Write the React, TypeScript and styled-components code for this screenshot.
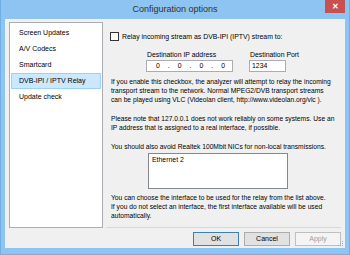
import React from 'react';
import styled, { createGlobalStyle } from 'styled-components';

const GlobalStyle = createGlobalStyle`
	html, body {
		margin: 0;
		padding: 0;
	}
	body {
		width: 350px;
		height: 255px;
		overflow: hidden;
		font-family: 'Liberation Sans', Arial, sans-serif;
		color: #000;
	}
`;

const Window = styled.div`
	width: 350px;
	height: 255px;
	box-sizing: border-box;
	background: #8ec4f1;
	border: 1px solid #71aee6;
	border-top: none;
	display: flex;
	flex-direction: column;
	padding: 0 4px 6px;
`;

const TitleBar = styled.div`
	height: 19px;
	display: grid;
	grid-template-columns: 1fr auto 1fr;
	align-items: start;
`;

const Title = styled.div`
	grid-column: 2;
	font-size: 9px;
	line-height: 19px;
	color: #303030;
`;

const CloseButton = styled.div`
	grid-column: 3;
	justify-self: end;
	width: 20px;
	height: 13px;
	background: #c75050;
	color: #fff;
	font-size: 8px;
	font-weight: bold;
	line-height: 13px;
	text-align: center;
`;

const Client = styled.div`
	flex: 1;
	background: #f0f0f0;
	display: flex;
	flex-direction: column;
	padding: 3px 4px 2px;
	position: relative;
`;

const MainRow = styled.div`
	height: 206px;
	display: flex;
`;

const PageList = styled.div`
	width: 94px;
	box-sizing: border-box;
	background: #fff;
	border: 1px solid #abadb3;
	padding: 2px 0 0;
	display: flex;
	flex-direction: column;
`;

const PageItem = styled.div<{ $selected?: boolean }>`
	height: 16px;
	box-sizing: border-box;
	margin: 0 1px;
	padding-left: 7px;
	font-size: 7px;
	line-height: 14px;
	border: 1px solid ${p => (p.$selected ? '#99d1ff' : 'transparent')};
	background: ${p => (p.$selected ? '#cce8ff' : 'transparent')};
	white-space: nowrap;
`;

const Panel = styled.div`
	flex: 1;
	margin-left: 3px;
	border-bottom: 1px solid #d8d8d8;
	display: flex;
	flex-direction: column;
	padding: 10px 0 0 4px;
	font-size: 6.7px;
	line-height: 9px;
`;

const CheckRow = styled.label`
	display: flex;
	align-items: center;
	gap: 3px;
	height: 9px;
	font-size: 6.9px;
`;

const CheckBox = styled.span`
	width: 9px;
	height: 9px;
	box-sizing: border-box;
	border: 1px solid #333;
	background: #fff;
`;

const DestRow = styled.div`
	display: flex;
	gap: 16px;
	margin: 9px 0 0 36px;
`;

const Field = styled.div`
	display: flex;
	flex-direction: column;
	gap: 1px;
`;

const FieldLabel = styled.div`
	padding-left: 1px;
	font-size: 6.9px;
`;

const TextBox = styled.div<{ $width: number }>`
	width: ${p => p.$width}px;
	height: 12px;
	box-sizing: border-box;
	border: 1px solid #abadb3;
	background: #fff;
	font-size: 6.9px;
	line-height: 10px;
	padding-left: 2px;
	display: flex;
	align-items: center;
`;

const IpSegment = styled.span`
	flex: 1;
	text-align: center;
`;

const IpDot = styled.span`
	width: 4px;
	text-align: center;
`;

const Paragraph = styled.p<{ $gap: number }>`
	margin: ${p => p.$gap}px 0 0 1px;
	width: 224px;
`;

const InterfaceList = styled.div`
	width: 140px;
	height: 36px;
	box-sizing: border-box;
	margin: 2px 0 0 38px;
	border: 1px solid #828790;
	background: #fff;
	padding: 1px 3px;
	font-size: 6.9px;
`;

const ButtonRow = styled.div`
	display: flex;
	justify-content: flex-end;
	gap: 5px;
	margin-top: 4px;
`;

const Button = styled.div<{ $default?: boolean; $disabled?: boolean }>`
	width: 46px;
	height: 14px;
	box-sizing: border-box;
	border: 1px solid ${p => (p.$default ? '#3c7fb1' : p.$disabled ? '#bfbfbf' : '#adadad')};
	background: ${p => (p.$disabled ? '#f4f4f4' : '#e1e1e1')};
	color: ${p => (p.$disabled ? '#a0a0a0' : '#000')};
	font-size: 7px;
	line-height: 12px;
	text-align: center;
`;

const SizeGrip = styled.svg`
	position: absolute;
	right: 1px;
	bottom: 1px;
`;

const pages = ['Screen Updates', 'A/V Codecs', 'Smartcard', 'DVB-IPI / IPTV Relay', 'Update check'];

export default function App() {
	return (
		<>
			<GlobalStyle />
			<Window>
				<TitleBar>
					<Title>Configuration options</Title>
					<CloseButton>✕</CloseButton>
				</TitleBar>
				<Client>
					<MainRow>
						<PageList>
							{pages.map(page => (
								<PageItem key={page} $selected={page === 'DVB-IPI / IPTV Relay'}>
									{page}
								</PageItem>
							))}
						</PageList>
						<Panel>
							<CheckRow>
								<CheckBox />
								Relay incoming stream as DVB-IPI (IPTV) stream to:
							</CheckRow>
							<DestRow>
								<Field>
									<FieldLabel>Destination IP address</FieldLabel>
									<TextBox $width={87}>
										<IpSegment>0</IpSegment>
										<IpDot>.</IpDot>
										<IpSegment>0</IpSegment>
										<IpDot>.</IpDot>
										<IpSegment>0</IpSegment>
										<IpDot>.</IpDot>
										<IpSegment>0</IpSegment>
									</TextBox>
								</Field>
								<Field>
									<FieldLabel>Destination Port</FieldLabel>
									<TextBox $width={37}>1234</TextBox>
								</Field>
							</DestRow>
							<Paragraph $gap={5}>
								If you enable this checkbox, the analyzer will attempt to relay the incoming
								transport stream to the network. Normal MPEG2/DVB transport streams can be played
								using VLC (Videolan client, http://www.videolan.org/vlc ).
							</Paragraph>
							<Paragraph $gap={10}>
								Please note that 127.0.0.1 does not work reliably on some systems. Use an IP address
								that is assigned to a real interface, if possible.
							</Paragraph>
							<Paragraph $gap={10}>
								You should also avoid Realtek 100Mbit NICs for non-local transmissions.
							</Paragraph>
							<InterfaceList>Ethernet 2</InterfaceList>
							<Paragraph $gap={4}>
								You can choose the interface to be used for the relay from the list above.
								<br />
								If you do not select an interface, the first interface available will be used
								automatically.
							</Paragraph>
						</Panel>
					</MainRow>
					<ButtonRow>
						<Button $default>OK</Button>
						<Button>Cancel</Button>
						<Button $disabled>Apply</Button>
					</ButtonRow>
					<SizeGrip width="6" height="6" viewBox="0 0 6 6">
						<rect x="4" y="0" width="1" height="1" fill="#aaa" />
						<rect x="2" y="2" width="1" height="1" fill="#aaa" />
						<rect x="4" y="2" width="1" height="1" fill="#aaa" />
						<rect x="0" y="4" width="1" height="1" fill="#aaa" />
						<rect x="2" y="4" width="1" height="1" fill="#aaa" />
						<rect x="4" y="4" width="1" height="1" fill="#aaa" />
					</SizeGrip>
				</Client>
			</Window>
		</>
	);
}
